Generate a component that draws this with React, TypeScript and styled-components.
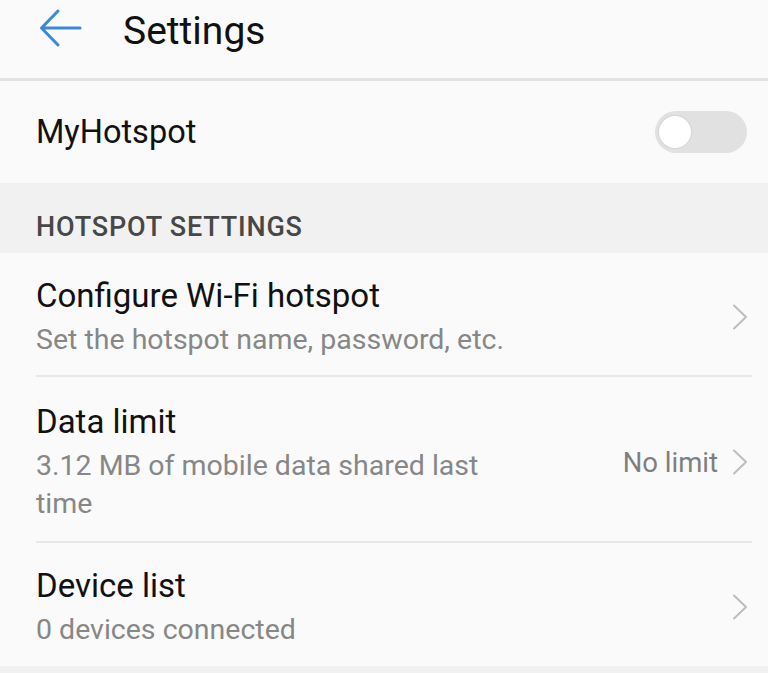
import React from 'react';
import styled, { createGlobalStyle } from 'styled-components';

const GlobalStyle = createGlobalStyle`
  html, body {
    margin: 0;
    padding: 0;
    background: #fafafa;
    font-family: Roboto, "Noto Sans", "Liberation Sans", sans-serif;
  }
`;

const Page = styled.div`
  width: 768px;
  min-height: 673px;
  background: #fafafa;
  overflow: hidden;
`;

const Header = styled.header`
  display: flex;
  align-items: center;
  height: 78px;
  padding-left: 38px;
  border-bottom: 3px solid #e2e2e2;
`;

const BackButton = styled.button`
  display: flex;
  align-items: center;
  justify-content: center;
  width: 46px;
  height: 46px;
  padding: 0;
  margin-top: -18px;
  border: none;
  background: none;
  cursor: pointer;
`;

const HeaderTitle = styled.h1`
  margin: -16px 0 0 39px;
  font-size: 39px;
  font-weight: 400;
  color: #111;
`;

const SwitchRow = styled.div`
  display: flex;
  align-items: center;
  justify-content: space-between;
  height: 102px;
  padding: 0 21px 0 36px;
`;

const SwitchLabel = styled.span`
  font-size: 32.5px;
  color: #111;
`;

const Track = styled.div<{ on?: boolean }>`
  display: flex;
  align-items: center;
  width: 92px;
  height: 42px;
  padding: 0 4px;
  box-sizing: border-box;
  border-radius: 21px;
  background: ${(p) => (p.on ? '#3d87d8' : '#e1e1e1')};
  justify-content: ${(p) => (p.on ? 'flex-end' : 'flex-start')};
`;

const Knob = styled.div`
  width: 32px;
  height: 32px;
  border-radius: 50%;
  background: #fff;
  box-shadow: 0 0 0 1px #d6d6d6;
`;

const SectionHeader = styled.div`
  display: flex;
  align-items: center;
  height: 70px;
  padding: 18px 36px 0;
  box-sizing: border-box;
  background: #f1f1f1;
  font-size: 27px;
  font-weight: 500;
  letter-spacing: 0.8px;
  color: #474747;
`;

const List = styled.div`
  padding-left: 36px;
  padding-right: 16px;
`;

const Item = styled.div<{ last?: boolean; multiline?: boolean }>`
  display: flex;
  align-items: center;
  padding: ${(p) => (p.multiline ? '24px 0 18px' : p.last ? '22px 0 17px' : '22px 0 16px')};
  border-bottom: ${(p) => (p.last ? 'none' : '2px solid #e8e8e8')};
`;

const ItemText = styled.div<{ maxWidth?: number }>`
  flex: 1;
  max-width: ${(p) => (p.maxWidth ? `${p.maxWidth}px` : 'none')};
`;

const Title = styled.div`
  font-size: 33px;
  line-height: 42px;
  color: #111;
`;

const Subtitle = styled.div`
  margin-top: 4px;
  font-size: 28.5px;
  line-height: 38px;
  color: #878787;
`;

const Value = styled.span`
  margin-left: auto;
  margin-right: 14px;
  font-size: 27.5px;
  color: #7f7f7f;
`;

const Chevron = styled.svg`
  flex: none;
  width: 16px;
  height: 26px;
  margin-right: 4px;
`;

const BottomBand = styled.div`
  height: 8px;
  background: #f1f1f1;
`;

const ArrowIcon = () => (
  <svg width="46" height="46" viewBox="0 0 46 46" fill="none">
    <path
      d="M4 21 H42 M20 4 L3.5 21 L20 38"
      stroke="#3d87d8"
      strokeWidth="3"
      strokeLinecap="round"
      strokeLinejoin="round"
    />
  </svg>
);

const ChevronIcon = () => (
  <Chevron viewBox="0 0 16 26" fill="none">
    <path d="M2 1.5 L14 13 L2 24.5" stroke="#bdbdbd" strokeWidth="2" strokeLinecap="round" strokeLinejoin="round" />
  </Chevron>
);

interface RowProps {
  title: string;
  subtitle: string;
  value?: string;
  maxWidth?: number;
  last?: boolean;
}

const SettingRow: React.FC<RowProps> = ({ title, subtitle, value, maxWidth, last }) => (
  <Item last={last} multiline={!!maxWidth}>
    <ItemText maxWidth={maxWidth}>
      <Title>{title}</Title>
      <Subtitle>{subtitle}</Subtitle>
    </ItemText>
    {value && <Value>{value}</Value>}
    <ChevronIcon />
  </Item>
);

const App: React.FC = () => {
  return (
    <Page>
      <GlobalStyle />
      <Header>
        <BackButton aria-label="Back">
          <ArrowIcon />
        </BackButton>
        <HeaderTitle>Settings</HeaderTitle>
      </Header>
      <SwitchRow>
        <SwitchLabel>MyHotspot</SwitchLabel>
        <Track>
          <Knob />
        </Track>
      </SwitchRow>
      <SectionHeader>HOTSPOT SETTINGS</SectionHeader>
      <List>
        <SettingRow title="Configure Wi-Fi hotspot" subtitle="Set the hotspot name, password, etc." />
        <SettingRow
          title="Data limit"
          subtitle="3.12 MB of mobile data shared last time"
          value="No limit"
          maxWidth={480}
        />
        <SettingRow title="Device list" subtitle="0 devices connected" last />
      </List>
      <BottomBand />
    </Page>
  );
};

export default App;
